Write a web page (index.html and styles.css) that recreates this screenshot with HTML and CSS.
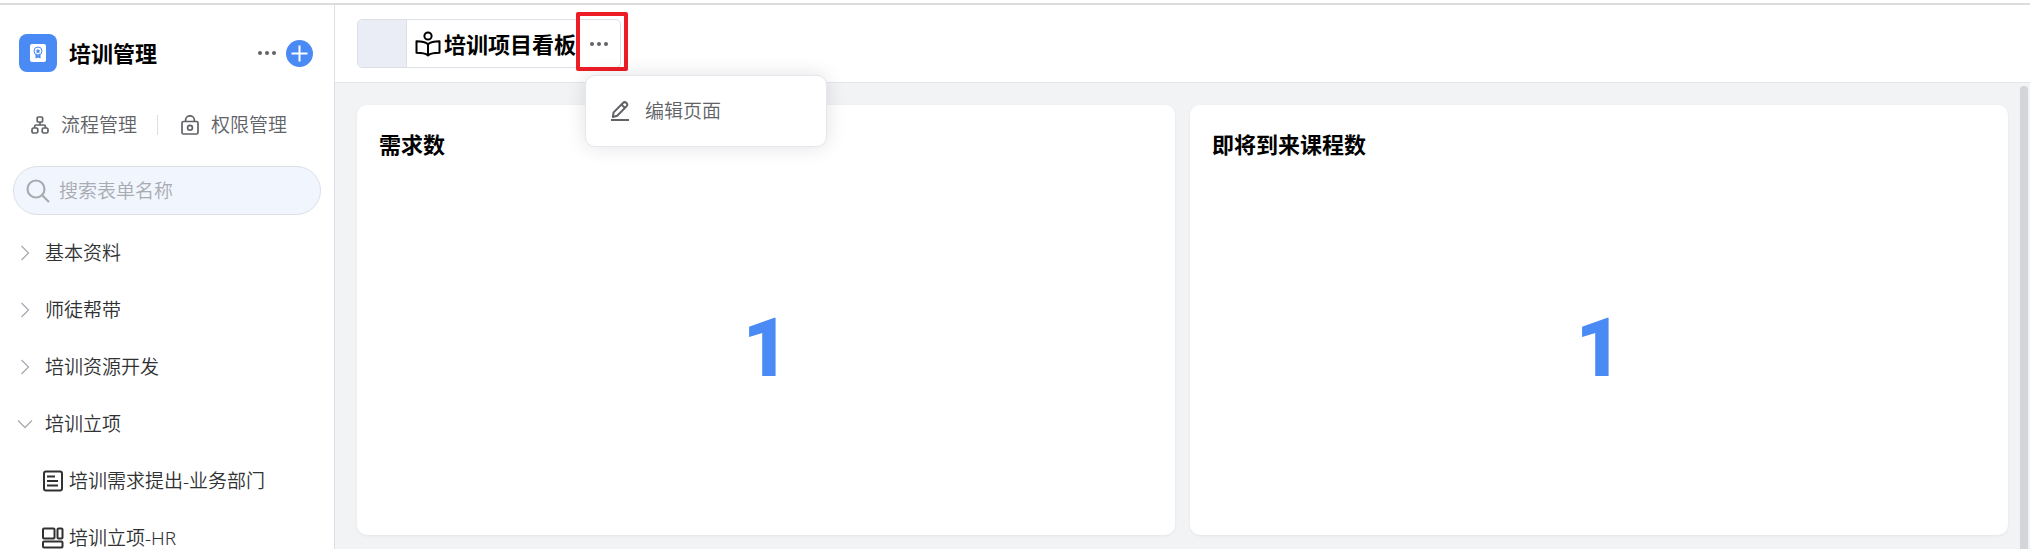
FILE: index.html
```html
<!DOCTYPE html>
<html lang="zh-CN">
<head>
    <meta charset="UTF-8">
    <meta name="viewport" content="width=device-width, initial-scale=1.0">
    <title>培训管理</title>
    <link rel="stylesheet" href="styles.css">
</head>
<body>

<div class="app">
    <aside class="sidebar">
        <div class="app-header">
            <span class="app-logo">
                <svg width="18" height="20" viewBox="0 0 18 20" fill="none">
                    <rect x="1" y="1" width="16" height="18" rx="2" fill="#fff"/>
                    <circle cx="9" cy="8" r="4" stroke="#4a8af4" stroke-width="1"/>
                    <path d="M9 5.500l.8 1.700 1.800.2-1.300 1.200.3 1.800L9 9.500l-1.600.9.3-1.800-1.300-1.200 1.800-.2z" fill="#4a8af4"/>
                    <path d="M6.500 11.600v4L9 14.400l2.500 1.200v-4L9 12.600z" fill="#4a8af4"/>
                </svg>
            </span>
            <h1 class="app-title">培训管理</h1>
            <button type="button" class="icon-button" aria-label="更多">
                <svg width="18" height="4" viewBox="0 0 18 4" fill="#606266"><circle cx="2" cy="2" r="2"/><circle cx="9" cy="2" r="2"/><circle cx="16" cy="2" r="2"/></svg>
            </button>
            <button type="button" class="add-button" aria-label="新建">
                <svg width="27" height="27" viewBox="0 0 27 27" stroke="#fff" stroke-width="2"><path d="M13.500 5.500v16M5.500 13.500h16"/></svg>
            </button>
        </div>

        <nav class="manage-links">
            <a href="#">
                <svg width="18" height="18" viewBox="0 0 18 18" fill="none" stroke="#606266" stroke-width="1.7">
                    <rect x="6.200" y="1" width="5.400" height="5" rx="1"/>
                    <rect x="1" y="12" width="5.800" height="5" rx="1.600"/>
                    <rect x="11.200" y="12" width="5.800" height="5" rx="1.600"/>
                    <path d="M9 6v3M3.600 12V10.600Q3.600 9 5.200 9h7.600Q14.400 9 14.400 10.600V12"/>
                </svg>
                流程管理
            </a>
            <a href="#">
                <svg width="18" height="20" viewBox="0 0 18 20" fill="none" stroke="#606266" stroke-width="1.7">
                    <rect x="1" y="6.500" width="16" height="12.500" rx="1.500"/>
                    <path d="M4.600 6.500V5a4.400 4.200 0 0 1 8.800 0v1.500"/>
                    <circle cx="9" cy="12.800" r="2.400"/>
                </svg>
                权限管理
            </a>
        </nav>

        <label class="search">
            <svg width="24" height="24" viewBox="0 0 24 24" fill="none" stroke="#a8abb2" stroke-width="2.2"><circle cx="10" cy="10" r="8.500"/><path d="M16 16l7 7"/></svg>
            <input type="text" placeholder="搜索表单名称" aria-label="搜索表单名称">
        </label>

        <ul class="menu">
            <li><button type="button" class="menu-group"><svg class="arrow" width="16" height="16" viewBox="0 0 16 16"><path d="M4.500 1l7 7-7 7"/></svg>基本资料</button></li>
            <li><button type="button" class="menu-group"><svg class="arrow" width="16" height="16" viewBox="0 0 16 16"><path d="M4.500 1l7 7-7 7"/></svg>师徒帮带</button></li>
            <li><button type="button" class="menu-group"><svg class="arrow" width="16" height="16" viewBox="0 0 16 16"><path d="M4.500 1l7 7-7 7"/></svg>培训资源开发</button></li>
            <li>
                <button type="button" class="menu-group" aria-expanded="true"><svg class="arrow" width="16" height="16" viewBox="0 0 16 16"><path d="M1 4.500l7 7 7-7"/></svg>培训立项</button>
                <ul class="submenu">
                    <li><a href="#">
                        <svg width="22" height="22" viewBox="0 0 22 22" fill="none" stroke="#303133" stroke-width="2">
                            <rect x="2" y="1.500" width="18" height="19" rx="2"/>
                            <path d="M5 6.500h8M5 11h11M5 15.500h11"/>
                        </svg>
                        培训需求提出-业务部门
                    </a></li>
                    <li><a href="#">
                        <svg width="22" height="22" viewBox="0 0 22 22" fill="none" stroke="#303133" stroke-width="2">
                            <rect x="1" y="1.500" width="11.500" height="10" rx="1"/>
                            <rect x="15.500" y="1.500" width="5" height="10" rx="1"/>
                            <rect x="1" y="14.500" width="19.500" height="6" rx="1"/>
                        </svg>
                        培训立项-HR
                    </a></li>
                </ul>
            </li>
        </ul>
    </aside>

    <main class="main">
        <header class="topbar">
            <div class="tab">
                <span class="tab-handle"></span>
                <h2 class="tab-title">
                    <svg width="26" height="26" viewBox="0 0 26 26" fill="none" stroke="#000" stroke-width="2" stroke-linejoin="round">
                        <circle cx="13" cy="5" r="3.600"/>
                        <path d="M13 13.200C10.500 11 6 10.200 1.500 10.200v11.600C6 21.800 10.500 22.400 13 24.400c2.500-2 7-2.600 11.500-2.600V10.200C20 10.200 15.500 11 13 13.200z"/>
                        <path d="M13 13.200v11"/>
                    </svg>
                    培训项目看板
                </h2>
                <div class="tab-more">
                    <button type="button" class="icon-button" aria-label="页面操作">
                        <svg width="18" height="4" viewBox="0 0 18 4" fill="#606266"><circle cx="2" cy="2" r="2"/><circle cx="9" cy="2" r="2"/><circle cx="16" cy="2" r="2"/></svg>
                    </button>
                    <span class="highlight"></span>
                    <div class="dropdown">
                        <button type="button" class="dropdown-item">
                            <svg width="20" height="20" viewBox="0 0 20 20" fill="none" stroke="#606266" stroke-width="2">
                                <path d="M2.800 16l.8-4.600L13 2c1.100-1.100 2.400-1.100 3.500-.1s1.100 2.400 0 3.500L7.200 14.800z" stroke-linejoin="round"/>
                                <path d="M11.600 3.600l3.400 3.400M1 19h18"/>
                            </svg>
                            编辑页面
                        </button>
                    </div>
                </div>
            </div>
        </header>

        <div class="content">
            <div class="cards">
                <section class="card">
                    <h3 class="card-title">需求数</h3>
                    <div class="card-value">1</div>
                </section>
                <section class="card">
                    <h3 class="card-title">即将到来课程数</h3>
                    <div class="card-value">1</div>
                </section>
            </div>
            <div class="scrollbar"></div>
        </div>
    </main>
</div>

</body>
</html>
```
FILE: styles.css
```css
* {
    box-sizing: border-box;
}
body {
    margin: 0;
    padding-top: 3px;
    height: 100vh;
    overflow: hidden;
    font-family: "Noto Sans", "Noto Sans CJK SC", sans-serif;
    font-size: 19px;
    font-weight: 350;
    line-height: 28px;
    color: #303133;
    background-color: #fff;
}
h1, h2, h3, ul {
    margin: 0;
    padding: 0;
}
ul {
    list-style: none;
}
a {
    color: inherit;
    text-decoration: none;
}
button {
    padding: 0;
    border: none;
    background: none;
    font: inherit;
    color: inherit;
    cursor: pointer;
}
svg {
    display: block;
    flex: none;
}
.app {
    display: flex;
    height: 100%;
    border-top: 2px solid #dcdcdc;
}

/* sidebar */
.sidebar {
    flex: none;
    width: 335px;
    padding: 29px 13px 0;
    border-right: 1px solid #dcdfe6;
}
.app-header {
    display: flex;
    align-items: center;
    padding: 0 8px 0 6px;
}
.app-logo {
    display: flex;
    align-items: center;
    justify-content: center;
    width: 38px;
    height: 38px;
    border-radius: 8px;
    background-color: #4a8af4;
}
.app-title {
    flex: 1;
    margin-left: 12px;
    font-size: 22px;
    font-weight: bold;
    color: #000;
}
.icon-button {
    display: flex;
    align-items: center;
    justify-content: center;
}
.add-button {
    margin-left: 10px;
    border-radius: 50%;
    background-color: #4a8af4;
}
.manage-links {
    display: flex;
    align-items: center;
    margin: 39px 0 27px 18px;
    color: #606266;
}
.manage-links a {
    display: flex;
    align-items: center;
    gap: 12px;
}
.manage-links a + a {
    position: relative;
    margin-left: 20px;
    padding-left: 24px;
}
.manage-links a + a::before {
    content: "";
    position: absolute;
    left: 0;
    top: 4px;
    width: 1px;
    height: 20px;
    background-color: #dcdfe6;
}
.search {
    display: flex;
    align-items: center;
    gap: 9px;
    height: 49px;
    padding: 0 12px;
    border: 1px solid #dcdfe6;
    border-radius: 25px;
    background-color: #f1f5fd;
}
.search input {
    flex: 1;
    min-width: 0;
    padding: 0;
    border: none;
    outline: none;
    background: none;
    font: inherit;
    color: #303133;
}
.search input::placeholder {
    color: #a8abb2;
}
.menu {
    margin-top: 9px;
}
.menu-group,
.submenu a {
    display: flex;
    align-items: center;
    width: 100%;
    height: 57px;
}
.menu-group {
    gap: 12px;
    padding-left: 4px;
}
.submenu a {
    gap: 5px;
    padding-left: 29px;
    white-space: nowrap;
}
.arrow {
    fill: none;
    stroke: #a8abb2;
    stroke-width: 1.3;
}

/* main area */
.main {
    flex: 1;
    display: flex;
    flex-direction: column;
    min-width: 0;
}
.topbar {
    display: flex;
    align-items: center;
    padding: 14px 22px;
    border-bottom: 1px solid #e4e7ed;
}
.tab {
    display: flex;
    height: 49px;
    border: 1px solid #dcdfe6;
    border-radius: 5px;
}
.tab-handle {
    width: 49px;
    border-right: 1px solid #dcdfe6;
    border-radius: 4px 0 0 4px;
    background-color: #eaedf6;
}
.tab-title {
    display: flex;
    align-items: center;
    gap: 3px;
    padding-left: 8px;
    font-size: 22px;
    font-weight: bold;
    color: #000;
}
.tab-more {
    position: relative;
    display: flex;
    padding: 0 12px 0 14px;
}
.highlight {
    position: absolute;
    top: -8px;
    left: 0;
    right: -8px;
    bottom: -4px;
    border: 4px solid #ee1c25;
    border-radius: 2px;
    pointer-events: none;
}
.dropdown {
    position: absolute;
    top: 55px;
    left: 9px;
    z-index: 1;
    width: 242px;
    padding: 21px 24px;
    border: 1px solid #e4e7ed;
    border-radius: 10px;
    background-color: #fff;
    box-shadow: 0 0 20px rgba(0, 0, 0, 0.12);
}
.dropdown-item {
    display: flex;
    align-items: center;
    gap: 15px;
    width: 100%;
    color: #606266;
}
.content {
    flex: 1;
    display: flex;
    min-height: 0;
    background-color: #f2f3f5;
}
.cards {
    flex: 1;
    display: grid;
    grid-template-columns: 1fr 1fr;
    align-items: start;
    gap: 15px;
    padding: 22px 12px 0 22px;
}
.card {
    display: flex;
    flex-direction: column;
    min-height: 430px;
    padding: 25px 22px 0;
    border-radius: 10px;
    background-color: #fff;
    box-shadow: 0 1px 3px rgba(0, 0, 0, 0.06);
}
.card-title {
    margin-bottom: 4px;
    font-size: 22px;
    font-weight: bold;
    color: #000;
}
.card-value {
    flex: 1;
    display: flex;
    align-items: center;
    justify-content: center;
    font-family: Roboto, sans-serif;
    font-size: 81px;
    font-weight: 900;
    color: #4a8af4;
}
.scrollbar {
    width: 8px;
    margin: 3px 2px 0 0;
    border-radius: 4px 4px 0 0;
    background-color: #d4d5d9;
}
```
